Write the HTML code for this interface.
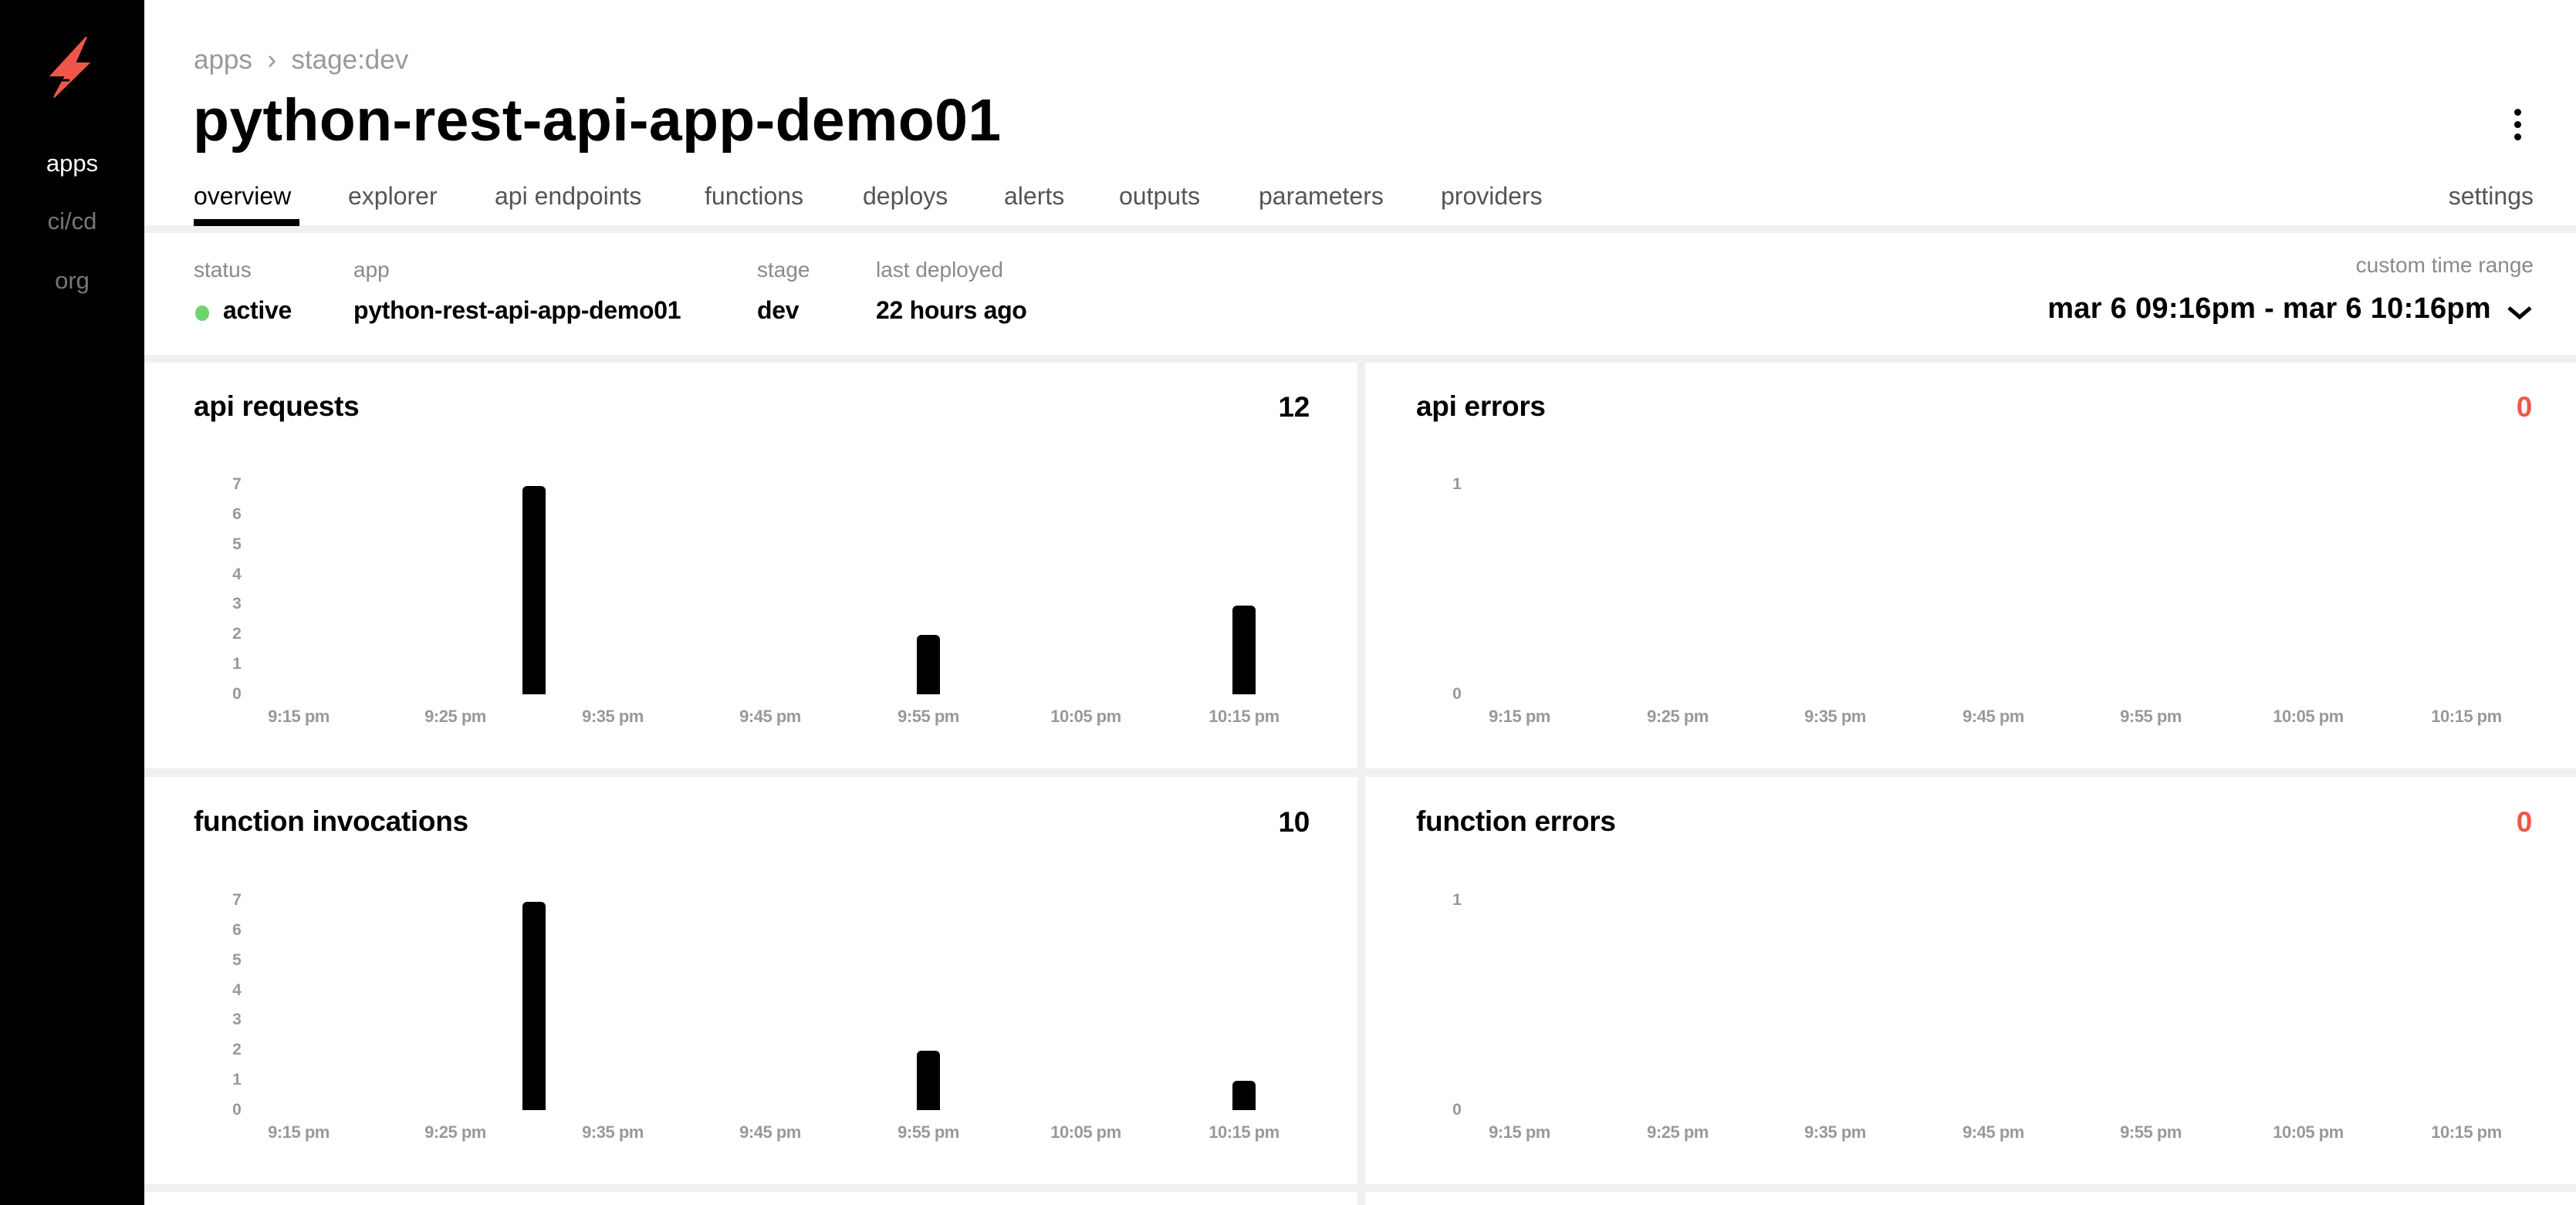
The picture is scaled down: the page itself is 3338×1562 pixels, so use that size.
<!DOCTYPE html>
<html><head><meta charset="utf-8"><style>
*{margin:0;padding:0;box-sizing:border-box}
body{width:3338px;height:1562px;background:#f0f0f0;font-family:"Liberation Sans",sans-serif;position:relative;overflow:hidden;color:#000}
.a{position:absolute;white-space:nowrap}
.side{left:0;top:0;width:187px;height:1562px;background:#000}
.w{background:#fff;position:absolute}
.nav{font-size:31px;width:187px;text-align:center;left:0}
.tab{font-size:32px;color:#555;top:236px}
.lbl{font-size:28px;color:#8a8a8a;top:334px}
.val{font-size:32px;top:384px;font-weight:bold;letter-spacing:-0.3px}
.pt{font-size:37px;font-weight:bold;letter-spacing:-0.3px}
.yl{font-size:21px;color:#999;font-weight:bold;width:30px;text-align:center}
.xl{font-size:22px;color:#999;font-weight:bold;width:160px;text-align:center;letter-spacing:-0.5px}
.bar{position:absolute;background:#000;width:30px;border-radius:6px 6px 0 0}
</style></head><body>
<div class="a side"></div>
<svg class="a" style="left:60px;top:46px" width="60" height="84" viewBox="0 0 60 84"><path d="M52 2 L6 52 L25 52 L10 80 L55 36 L37 36 L52 2Z" fill="#f0574b" stroke="#f0574b" stroke-width="2"/><path d="M10 58 L30 58" stroke="#000" stroke-width="3"/></svg>
<div class="a nav" style="top:194px;color:#fff">apps</div>
<div class="a nav" style="top:269px;color:#777">ci/cd</div>
<div class="a nav" style="top:346px;color:#777">org</div>

<div class="w" style="left:187px;top:0;width:3151px;height:292px"></div>
<div class="a" style="left:251px;top:58px;font-size:35px;color:#999">apps &nbsp;›&nbsp; stage:dev</div>
<div class="a" style="left:250px;top:112px;font-size:77px;font-weight:bold;letter-spacing:0.3px">python-rest-api-app-demo01</div>
<div class="a" style="left:3258px;top:141px;width:9px;height:9px;border-radius:50%;background:#000;box-shadow:0 16px 0 #000,0 32px 0 #000"></div>
<div class="a tab" style="left:251px;color:#000">overview</div>
<div class="a" style="left:251px;top:284px;width:137px;height:9px;background:#000"></div>
<div class="a tab" style="left:451px">explorer</div>
<div class="a tab" style="left:641px">api endpoints</div>
<div class="a tab" style="left:913px">functions</div>
<div class="a tab" style="left:1118px">deploys</div>
<div class="a tab" style="left:1301px">alerts</div>
<div class="a tab" style="left:1450px">outputs</div>
<div class="a tab" style="left:1631px">parameters</div>
<div class="a tab" style="left:1867px">providers</div>
<div class="a tab" style="right:55px">settings</div>

<div class="w" style="left:187px;top:302px;width:3151px;height:158px"></div>
<div class="a lbl" style="left:251px">status</div>
<div class="a lbl" style="left:458px">app</div>
<div class="a lbl" style="left:981px">stage</div>
<div class="a lbl" style="left:1135px">last deployed</div>
<div class="a" style="left:253px;top:396px;width:18px;height:20px;border-radius:50%;background:#6fd36f"></div>
<div class="a val" style="left:289px">active</div>
<div class="a val" style="left:458px">python-rest-api-app-demo01</div>
<div class="a val" style="left:981px">dev</div>
<div class="a val" style="left:1135px">22 hours ago</div>
<div class="a lbl" style="right:55px;top:328px">custom time range</div>
<div class="a" style="right:110px;top:379px;font-size:38px;font-weight:bold;letter-spacing:0.3px">mar 6 09:16pm - mar 6 10:16pm</div>
<svg class="a" style="left:3247px;top:393px" width="36" height="24" viewBox="0 0 36 24"><path d="M4 6 L18 18 L32 6" stroke="#000" stroke-width="5" fill="none"/></svg>

<div class="w" style="left:187px;top:470px;width:1572px;height:526px"></div>
<div class="w" style="left:1769px;top:470px;width:1569px;height:526px"></div>
<div class="w" style="left:187px;top:1007px;width:1572px;height:528px"></div>
<div class="w" style="left:1769px;top:1007px;width:1569px;height:528px"></div>
<div class="w" style="left:187px;top:1545px;width:1572px;height:17px"></div>
<div class="w" style="left:1769px;top:1545px;width:1569px;height:17px"></div>

<div class="a pt" style="left:251px;top:506px">api requests</div>
<div class="a pt" style="right:1641px;top:507px">12</div>
<div class="a pt" style="left:1835px;top:506px">api errors</div>
<div class="a pt" style="right:57px;top:507px;color:#f0574b">0</div>
<div class="a pt" style="left:251px;top:1044px">function invocations</div>
<div class="a pt" style="right:1641px;top:1045px">10</div>
<div class="a pt" style="left:1835px;top:1044px">function errors</div>
<div class="a pt" style="right:57px;top:1045px;color:#f0574b">0</div>

<div class="a yl" style="left:292px;top:616px">7</div>
<div class="a yl" style="left:292px;top:655px">6</div>
<div class="a yl" style="left:292px;top:694px">5</div>
<div class="a yl" style="left:292px;top:733px">4</div>
<div class="a yl" style="left:292px;top:771px">3</div>
<div class="a yl" style="left:292px;top:810px">2</div>
<div class="a yl" style="left:292px;top:849px">1</div>
<div class="a yl" style="left:292px;top:888px">0</div>
<div class="bar" style="left:677px;top:630px;height:270px"></div>
<div class="bar" style="left:1188px;top:823px;height:77px"></div>
<div class="bar" style="left:1597px;top:785px;height:115px"></div>
<div class="a xl" style="left:307px;top:916px">9:15 pm</div>
<div class="a xl" style="left:510px;top:916px">9:25 pm</div>
<div class="a xl" style="left:714px;top:916px">9:35 pm</div>
<div class="a xl" style="left:918px;top:916px">9:45 pm</div>
<div class="a xl" style="left:1123px;top:916px">9:55 pm</div>
<div class="a xl" style="left:1327px;top:916px">10:05 pm</div>
<div class="a xl" style="left:1532px;top:916px">10:15 pm</div>

<div class="a yl" style="left:1873px;top:616px">1</div>
<div class="a yl" style="left:1873px;top:888px">0</div>
<div class="a xl" style="left:1889px;top:916px">9:15 pm</div>
<div class="a xl" style="left:2094px;top:916px">9:25 pm</div>
<div class="a xl" style="left:2298px;top:916px">9:35 pm</div>
<div class="a xl" style="left:2503px;top:916px">9:45 pm</div>
<div class="a xl" style="left:2707px;top:916px">9:55 pm</div>
<div class="a xl" style="left:2911px;top:916px">10:05 pm</div>
<div class="a xl" style="left:3116px;top:916px">10:15 pm</div>

<div class="a yl" style="left:292px;top:1155px">7</div>
<div class="a yl" style="left:292px;top:1194px">6</div>
<div class="a yl" style="left:292px;top:1233px">5</div>
<div class="a yl" style="left:292px;top:1272px">4</div>
<div class="a yl" style="left:292px;top:1310px">3</div>
<div class="a yl" style="left:292px;top:1349px">2</div>
<div class="a yl" style="left:292px;top:1388px">1</div>
<div class="a yl" style="left:292px;top:1427px">0</div>
<div class="bar" style="left:677px;top:1169px;height:270px"></div>
<div class="bar" style="left:1188px;top:1362px;height:77px"></div>
<div class="bar" style="left:1597px;top:1401px;height:38px"></div>
<div class="a xl" style="left:307px;top:1455px">9:15 pm</div>
<div class="a xl" style="left:510px;top:1455px">9:25 pm</div>
<div class="a xl" style="left:714px;top:1455px">9:35 pm</div>
<div class="a xl" style="left:918px;top:1455px">9:45 pm</div>
<div class="a xl" style="left:1123px;top:1455px">9:55 pm</div>
<div class="a xl" style="left:1327px;top:1455px">10:05 pm</div>
<div class="a xl" style="left:1532px;top:1455px">10:15 pm</div>

<div class="a yl" style="left:1873px;top:1155px">1</div>
<div class="a yl" style="left:1873px;top:1427px">0</div>
<div class="a xl" style="left:1889px;top:1455px">9:15 pm</div>
<div class="a xl" style="left:2094px;top:1455px">9:25 pm</div>
<div class="a xl" style="left:2298px;top:1455px">9:35 pm</div>
<div class="a xl" style="left:2503px;top:1455px">9:45 pm</div>
<div class="a xl" style="left:2707px;top:1455px">9:55 pm</div>
<div class="a xl" style="left:2911px;top:1455px">10:05 pm</div>
<div class="a xl" style="left:3116px;top:1455px">10:15 pm</div>
</body></html>
